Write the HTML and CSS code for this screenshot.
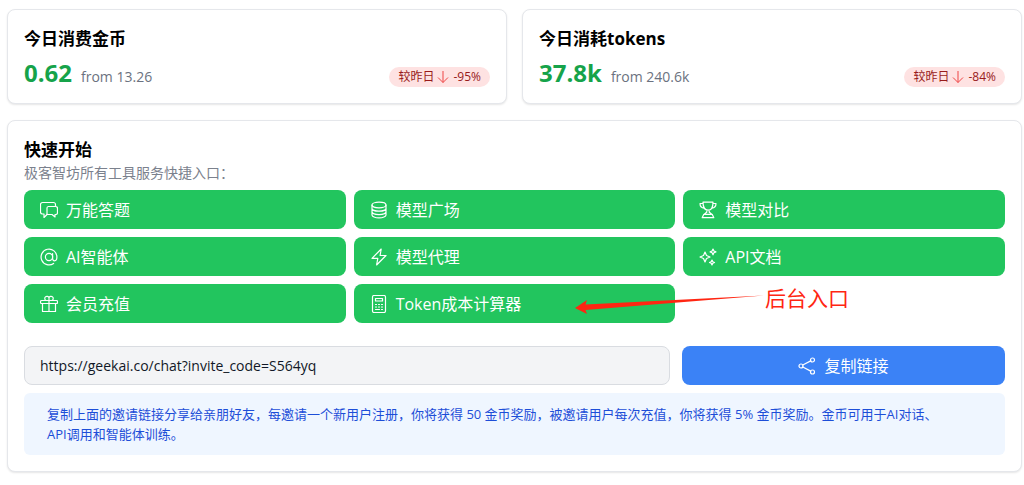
FILE: index.html
```html
<!DOCTYPE html>
<html lang="zh-CN">
<head>
    <meta charset="UTF-8">
    <meta name="viewport" content="width=device-width, initial-scale=1">
    <title>快速开始</title>
    <link rel="stylesheet" href="styles.css">
</head>
<body>
<!-- 今日统计 -->
<div class="stats">
    <div class="card">
        <h2 class="title">今日消费金币</h2>
        <div class="stat-row">
            <div class="stat-value"><strong>0.62</strong><span>from 13.26</span></div>
            <div class="badge">较昨日<svg viewBox="0 0 12 14"><path d="M6 1v11.5M1 7.5l5 5 5-5"/></svg>-95%</div>
        </div>
    </div>
    <div class="card">
        <h2 class="title">今日消耗tokens</h2>
        <div class="stat-row">
            <div class="stat-value"><strong>37.8k</strong><span>from 240.6k</span></div>
            <div class="badge">较昨日<svg viewBox="0 0 12 14"><path d="M6 1v11.5M1 7.5l5 5 5-5"/></svg>-84%</div>
        </div>
    </div>
</div>

<!-- 快速开始 -->
<div class="card">
    <h2 class="title">快速开始</h2>
    <p class="desc">极客智坊所有工具服务快捷入口：</p>
    <div class="tools">
        <a class="tool" href="#">
            <svg class="icon" viewBox="0 0 18 18"><path d="M15.500 5.500V3.500a2 2 0 0 0-2-2H2.500a2 2 0 0 0-2 2V11a2 2 0 0 0 2 2h1.500v3.500L7 13.500"/><path d="M8.300 5.500h7.400a1.800 1.800 0 0 1 1.800 1.800v4.400a1.800 1.800 0 0 1-1.800 1.800h-.7v2.500l-3-2.500H7V7a1.500 1.500 0 0 1 1.300-1.500z"/></svg>
            万能答题
        </a>
        <a class="tool" href="#">
            <svg class="icon" viewBox="0 0 18 18"><ellipse cx="9" cy="4" rx="7" ry="2.8"/><path d="M2 4v10c0 1.500 3.100 2.900 7 2.900s7-1.400 7-2.900V4M2 7.400c0 1.500 3.100 2.800 7 2.800s7-1.300 7-2.800M2 10.800c0 1.500 3.100 2.800 7 2.800s7-1.300 7-2.800"/></svg>
            模型广场
        </a>
        <a class="tool" href="#">
            <svg class="icon" viewBox="0 0 18 18"><path d="M4 1.200h10M4 1.200c0 4.600 1.600 8 5 8s5-3.400 5-8M4.100 2.500H1c0 2.800 1.600 4.400 4.200 4.600M13.900 2.500H17c0 2.800-1.600 4.400-4.200 4.600M7.500 9l.4 2-2.600 2.300h7.400L10.100 11l.4-2M4.800 13.300h8.400l1.600 3.400H3.200z"/></svg>
            模型对比
        </a>
        <a class="tool" href="#">
            <svg class="icon" viewBox="0 0 18 18"><circle cx="9" cy="9" r="3.600"/><path d="M12.600 5.600v5c0 1.600.8 2.200 1.900 2.200 1.600 0 2.400-1.800 2.400-3.800a7.900 7.900 0 1 0-3.300 6.400"/></svg>
            AI智能体
        </a>
        <a class="tool" href="#">
            <svg class="icon" viewBox="0 0 18 18"><path d="M11.200 1L2 10.300h5.800L6.600 17 16 7.500h-5.900z"/></svg>
            模型代理
        </a>
        <a class="tool" href="#">
            <svg class="icon" viewBox="0 0 18 18"><path d="M6 4l1.500 3.500L11 9l-3.500 1.500L6 14l-1.500-3.500L1 9l3.500-1.500zM14 1l.9 2 2 .9-2 .9-.9 2-.9-2-2-.9 2-.9zM13 12l.8 1.700 1.700.8-1.700.8-.8 1.700-.8-1.700-1.700-.8 1.700-.8z"/></svg>
            API文档
        </a>
        <a class="tool" href="#">
            <svg class="icon" viewBox="0 0 18 18"><rect x="0.5" y="5.500" width="17" height="3" rx="1"/><path d="M2.500 8.500v8h13v-8M9 5.500v11M9 5.500H6a2.200 2.200 0 1 1 3-2.800zM9 5.500h3a2.200 2.200 0 1 0-3-2.800z"/></svg>
            会员充值
        </a>
        <a class="tool" href="#">
            <svg class="icon" viewBox="0 0 18 18"><rect x="2.500" y="0.5" width="13" height="17" rx="1.500"/><path d="M5.500 3.500h7v2.500h-7z"/><path d="M5.500 9.500h1M8.500 9.500h1M11.500 9.500h1M5.500 12h1M8.500 12h1M11.500 12h1M5.500 14.500h4M11.500 14.500h1"/></svg>
            Token成本计算器
        </a>
        <!-- 箭头标注 -->
        <div class="mark">
            <svg viewBox="0 0 190 30"><path d="M0 25l12-8-1.500 4.500L190 12.500 10.500 27l1.500 4z"/></svg>
            <span>后台入口</span>
        </div>
    </div>

    <div class="invite">
        <input class="invite-url" type="text" value="https://geekai.co/chat?invite_code=S564yq" aria-label="邀请链接" readonly>
        <button class="copy" type="button">
            <svg class="icon" viewBox="0 0 18 18"><circle cx="3" cy="9" r="2"/><circle cx="14.500" cy="3" r="2"/><circle cx="14.500" cy="15" r="2"/><path d="M4.800 8l7.900-4.100M4.800 10l7.900 4.100"/></svg>
            复制链接
        </button>
    </div>
    <p class="note">复制上面的邀请链接分享给亲朋好友，每邀请一个新用户注册，你将获得 50 金币奖励，被邀请用户每次充值，你将获得 5% 金币奖励。金币可用于AI对话、<span class="nowrap">API调用</span>和智能体训练。</p>
</div>
</body>
</html>
```
FILE: styles.css
```css
*{
    box-sizing: border-box;
}
body{
    margin: 0;
    padding: 9px 2px 12px 7px;
    background: #fff;
    color: #000;
    font-family: "Open Sans", "Noto Sans CJK SC", sans-serif;
    font-size: 14px;
}
h2, p{
    margin: 0;
}
.stats{
    display: grid;
    grid-template-columns: 1fr 1fr;
    gap: 15px;
    margin-bottom: 16px;
}
.card{
    padding: 16px;
    border: 1px solid #e5e7eb;
    border-radius: 8px;
    background: #fff;
    box-shadow: 0 1px 2px rgba(0, 0, 0, 0.1);
}
.title{
    font-size: 17px;
    font-weight: 700;
    line-height: 26px;
}
.stat-row{
    display: flex;
    justify-content: space-between;
    align-items: flex-end;
    margin-top: 7px;
}
.stat-value{
    display: flex;
    align-items: baseline;
    gap: 9px;
    line-height: 20px;
    color: #6b7280;
}
.stat-value strong{
    font-size: 24px;
    line-height: 28px;
    color: #16a34a;
}
.badge{
    display: flex;
    align-items: center;
    padding: 0 9px;
    border-radius: 10px;
    background: #fee2e2;
    color: #991b1b;
    font-size: 12px;
    line-height: 20px;
}
.badge svg{
    width: 12px;
    height: 14px;
    margin: 0 4px 0 3px;
    fill: none;
    stroke: #ef4444;
}

/* 工具入口 */
.desc{
    color: #7b818d;
    line-height: 19px;
}
.tools{
    position: relative;
    display: grid;
    grid-template-columns: repeat(3, 1fr);
    gap: 8px;
    margin-top: 8px;
}
.tool, .copy{
    display: flex;
    align-items: center;
    gap: 8px;
    height: 39px;
    padding: 0 16px;
    border: none;
    border-radius: 8px;
    color: #fff;
    font-family: inherit;
    font-size: 16px;
    line-height: 24px;
    text-decoration: none;
}
.tool{
    background: #22c55e;
}
.icon{
    flex: none;
    width: 18px;
    height: 18px;
    fill: none;
    stroke: currentColor;
    stroke-width: 1.2;
    stroke-linejoin: round;
    stroke-linecap: round;
}
.mark{
    position: absolute;
    left: 551px;
    top: 93px;
    display: flex;
    color: #ff2612;
    font-size: 21px;
    line-height: 30px;
    white-space: nowrap;
}
.mark svg{
    width: 190px;
    height: 30px;
    fill: currentColor;
    overflow: visible;
}

/* 邀请链接 */
.invite{
    display: grid;
    grid-template-columns: 2fr 1fr;
    gap: 12px;
    margin-top: 23px;
}
.invite-url{
    width: 100%;
    height: 39px;
    padding: 0 15px;
    border: 1px solid #d9dce1;
    border-radius: 8px;
    background: #f3f4f6;
    color: #111827;
    font-family: inherit;
    font-size: 14px;
}
.copy{
    justify-content: center;
    background: #3b82f6;
    cursor: pointer;
}
.note{
    margin-top: 8px;
    padding: 11px 23px;
    border-radius: 6px;
    background: #eff6ff;
    color: #1d4ed8;
    font-size: 13px;
    line-height: 20px;
}
.nowrap{
    white-space: nowrap;
}
```
